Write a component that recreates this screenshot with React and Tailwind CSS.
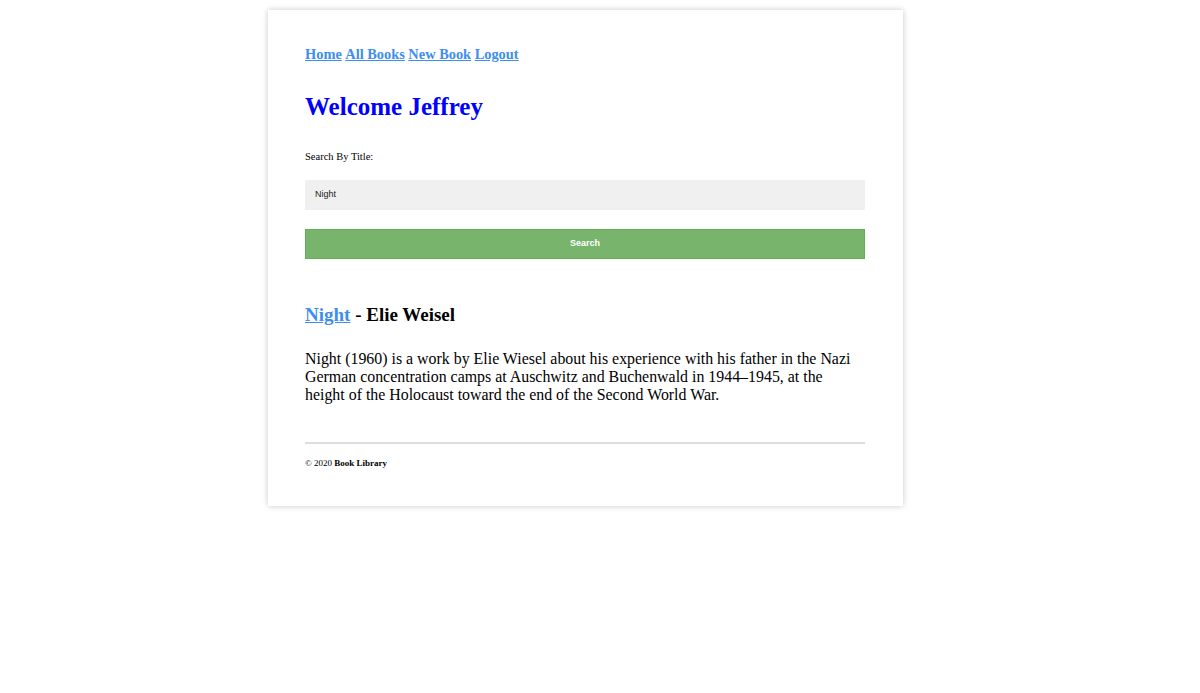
import React from "react";

export default function App() {
  const serif = { fontFamily: '"Liberation Serif", "Times New Roman", serif' };
  return (
    <div className="min-h-[693px] bg-white pr-[29px] pt-[10px]" style={serif}>
      <div className="mx-auto w-[635px] bg-white pl-[37px] pr-[38px] pt-[36px] pb-[37px] shadow-[0_0_6px_rgba(0,0,0,0.22)]">
        <nav className="flex gap-[3.5px] text-[14.4px] leading-[17px] font-bold text-[#3d8ef0]">
          <a href="#" className="underline">Home</a>
          <a href="#" className="underline">All Books</a>
          <a href="#" className="underline">New Book</a>
          <a href="#" className="underline">Logout</a>
        </nav>
        <h1 className="mt-[29px] text-[25px] leading-[29px] font-bold text-[#0000ff]">Welcome Jeffrey</h1>
        <div className="mt-[30px] text-[10.5px] leading-[12px] text-black">Search By Title:</div>
        <div
          className="mt-[17px] flex h-[30px] items-center bg-[#f0f0f0] px-[10px] text-[9px] text-[#222]"
          style={{ fontFamily: '"Liberation Sans", Arial, sans-serif' }}
        >
          Night
        </div>
        <button
          className="mt-[19px] flex h-[30px] w-full items-center justify-center border border-[#62ae55] bg-[#78b46c] text-[9px] font-bold text-white"
          style={{ fontFamily: '"Liberation Sans", Arial, sans-serif' }}
        >
          Search
        </button>
        <h2 className="mt-[45px] text-[19px] leading-[22px] font-bold text-black">
          <a href="#" className="text-[#3d8ef0] underline">Night</a> - Elie Weisel
        </h2>
        <p className="mt-[24px] text-[15.9px] leading-[18px] text-black">
          Night (1960) is a work by Elie Wiesel about his experience with his father in the Nazi German concentration camps at Auschwitz and Buchenwald in 1944–1945, at the height of the Holocaust toward the end of the Second World War.
        </p>
        <hr className="mt-[38px] border-t-2 border-[#dddddd]" />
        <footer className="mt-[14px] text-[9px] leading-[11px] text-black">
          © 2020 <span className="font-bold">Book Library</span>
        </footer>
      </div>
    </div>
  );
}
